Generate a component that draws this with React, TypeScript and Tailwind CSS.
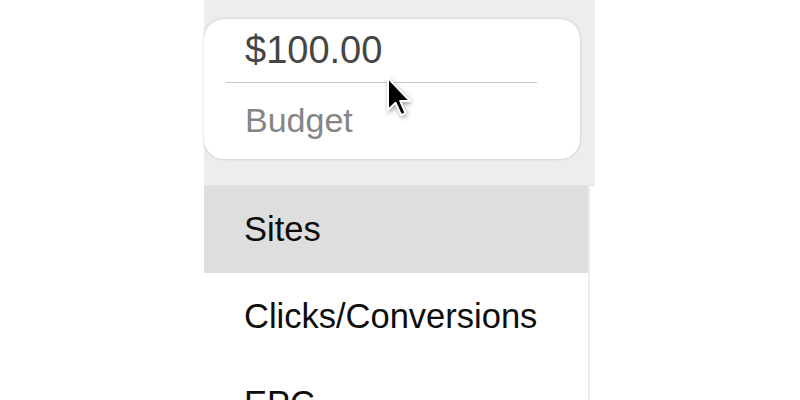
const rows = ["Sites", "Clicks/Conversions", "EPC"];

function Cursor() {
  return (
    <svg
      className="absolute left-[386px] top-[76px] drop-shadow-[1px_2px_2px_rgba(0,0,0,0.35)]"
      width="26"
      height="42"
      viewBox="0 0 13 21"
    >
      <path
        d="M1 1 L1 17 L4.8 13.4 L7.6 19.6 L9.8 18.6 L7.1 12.5 L12 12.5 Z"
        fill="#000"
        stroke="#fff"
        strokeWidth="1"
        strokeLinejoin="round"
      />
    </svg>
  );
}

export default function App() {
  return (
    <div className="relative h-[400px] w-[800px] overflow-hidden bg-white font-['Liberation_Sans',Arial,sans-serif]">
      <div className="ml-[204px] flex w-[391px] flex-col">
        {/* budget panel */}
        <div className="h-[186px] border-b border-[#e2e2e2] bg-[#ededed] pt-[19px]">
          <div className="h-[140px] w-[376px] rounded-[20px] bg-white pl-[22px] pr-[43px] shadow-[0_0_3px_rgba(0,0,0,0.2)]">
            <div className="pl-[19px] pt-[12px] text-[38px] leading-none text-[#454545]">
              $100.00
            </div>
            <div className="mt-[13px] h-px bg-[#c8c8c8]" />
            <div className="mt-[20px] pl-[19px] text-[34px] leading-none text-[#858585]">
              Budget
            </div>
          </div>
        </div>

        {/* menu */}
        <div className="w-[386px] border-r-2 border-[#ececec]">
          {rows.map((row, i) => (
            <div
              key={row}
              className={`flex h-[87px] items-center pl-[40px] text-[34.5px] leading-none text-[#0d0d0d] ${
                i === 0 ? "bg-[#dedede]" : "bg-white"
              }`}
            >
              {row}
            </div>
          ))}
        </div>
      </div>
      <Cursor />
    </div>
  );
}
